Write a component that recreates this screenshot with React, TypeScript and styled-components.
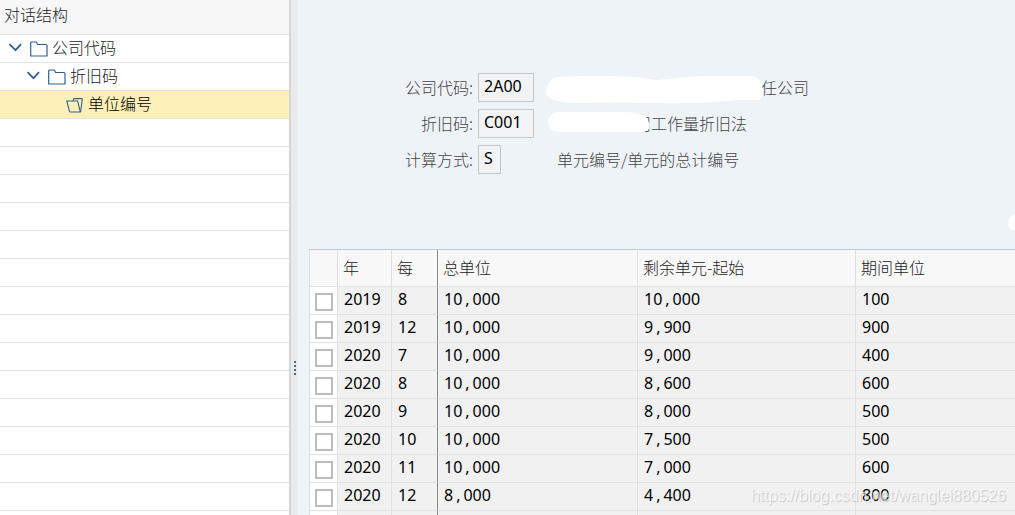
import React from "react";
import styled, { createGlobalStyle, css } from "styled-components";

const GlobalStyle = createGlobalStyle`
  *, *::before, *::after { box-sizing: border-box; }
  body {
    margin: 0;
    background: #eef3f8;
    color: #222;
    font-family: "Noto Sans CJK SC", sans-serif;
    font-size: 16px;
    font-weight: 300;
    line-height: 24px;
  }
`;

const valueFont = css`
  font-family: "Noto Sans", "Noto Sans CJK SC", sans-serif;
  font-size: 16px;
  font-weight: 400;
  color: #000;
`;

const Page = styled.div`
  position: relative;
  display: flex;
  height: 100vh;
  overflow: hidden;
`;

const Sidebar = styled.aside`
  flex: 0 0 289px;
  background: #fff;
  overflow: hidden;
`;

const SidebarTitle = styled.h2`
  margin: 0;
  height: 35px;
  padding: 2px 4px;
  border-bottom: 1px solid #e3e3e3;
  background: #f7f7f7;
  font-size: 16px;
  font-weight: 300;
`;

const Tree = styled.ul`
  margin: 0;
  padding: 0;
  list-style: none;
`;

const TreeRow = styled.li<{ $level?: number; $selected?: boolean }>`
  display: flex;
  align-items: center;
  height: 28px;
  padding-left: ${(p) => 8 + (p.$level ?? 0) * 18}px;
  border-bottom: 1px solid #e3e3e3;
  background: ${(p) => (p.$selected ? "#fcf0b8" : "#fff")};
  color: ${(p) => (p.$selected ? "#000" : "#222")};
`;

const Toggle = styled.button`
  width: 22px;
  height: 24px;
  padding: 0 0 2px;
  border: 0;
  background: none;
  text-align: left;
  line-height: 0;
`;

const ToggleSpace = styled.span`
  width: 22px;
`;

const Icon = styled.svg`
  display: block;
  fill: none;
  stroke: #30608f;
`;

const TreeLabel = styled.span`
  padding: 0 0 3px 4px;
`;

const Splitter = styled.div`
  flex: 0 0 9px;
  display: flex;
  justify-content: center;
  border-left: 2px solid #d6d6d6;
  background: #e9eaeb;
`;

const Grip = styled.div`
  align-self: center;
  display: grid;
  gap: 2px;
  margin-top: 220px;
`;

const Dot = styled.i`
  width: 2px;
  height: 2px;
  background: #52657c;
`;

const Main = styled.main`
  flex: 1;
  min-width: 0;
  display: flex;
  flex-direction: column;
  padding: 73px 0 0 11px;
`;

const Form = styled.form`
  display: grid;
  grid-template-columns: 164px 68px 1fr;
  column-gap: 5px;
  row-gap: 7px;
  margin-bottom: 75px;
  color: #444;
`;

const FieldLabel = styled.label`
  text-align: right;
  line-height: 28px;
`;

const Field = styled.input<{ $narrow?: boolean }>`
  ${valueFont}
  width: ${(p) => (p.$narrow ? 23 : 56)}px;
  height: 29px;
  padding: 0 4px 3px 5px;
  border: 1px solid #c4c6c8;
  border-radius: 0;
  background: #f1f3f4;
  outline: none;
`;

const Description = styled.div<{ $indent: number }>`
  position: relative;
  padding-left: ${(p) => p.$indent}px;
  line-height: 28px;
  white-space: nowrap;
`;

const Smudge = styled.svg`
  position: absolute;
  left: -5px;
  top: 0;
  fill: #fff;
`;

const EdgeSpot = styled.div`
  position: absolute;
  right: -9px;
  top: 215px;
  width: 16px;
  height: 16px;
  border-radius: 8px;
  background: #fff;
`;

const Grid = styled.table`
  width: 100%;
  table-layout: fixed;
  border-collapse: separate;
  border-spacing: 0;
  border-top: 1px solid #c3c7ca;
`;

const Col = styled.col<{ $width?: number }>`
  width: ${(p) => (p.$width ? `${p.$width}px` : "auto")};
`;

const cell = css<{ $frozenEdge?: boolean }>`
  border-left: 1px solid ${(p) => (p.$frozenEdge ? "#888" : "#e0e0e0")};
  border-bottom: 1px solid #e0e0e0;
  text-align: left;
  white-space: nowrap;
`;

const HeadCell = styled.th<{ $frozenEdge?: boolean }>`
  ${cell}
  height: 37px;
  padding: 0 5px 3px;
  background: #f8f8f8;
  font-weight: 300;
`;

const Cell = styled.td<{ $frozenEdge?: boolean }>`
  ${cell}
  ${valueFont}
  height: 28px;
  padding: 0 6px 3px;
  background: #f1f1f1;
`;

const SelectCell = styled(Cell)`
  padding: 2px 0 0 5px;
  background: #fff;
  line-height: 0;
`;

const Check = styled.input`
  appearance: none;
  width: 18px;
  height: 18px;
  margin: 0;
  border: 2px solid #bcbcbc;
  background: #fff;
`;

const Separator = styled.span`
  padding: 0 3px;
`;

const Watermark = styled.div`
  position: absolute;
  right: 9px;
  bottom: 7px;
  color: rgba(255, 255, 255, 0.7);
  font-family: "Liberation Sans", sans-serif;
  font-size: 16px;
  font-weight: 400;
  text-shadow: 1px 1px 1px rgba(0, 0, 0, 0.18);
  pointer-events: none;
`;

const Chevron = () => (
  <Icon width="14" height="9" viewBox="0 0 14 9" strokeWidth="1.8">
    <path d="M1.5 1.2 7.5 7.2 13 1.2" />
  </Icon>
);

const Folder = () => (
  <Icon width="18" height="18" viewBox="0 0 18 18" strokeWidth="1.2">
    <path d="M.7 16V3q0-1 1-1h4.1q.9 0 1 .9l.8 1.6H16q1 0 1 1V16Z" />
  </Icon>
);

const OpenFolder = () => (
  <Icon width="18" height="18" viewBox="0 0 18 18" strokeWidth="1.1">
    <path d="M.8 5H11.6L14.4 16H4Q3.6 16 3.4 15Z" />
    <path d="M7 5 8 2.6H15.8Q16.4 2.6 16.3 3.2L14.6 16" />
  </Icon>
);

const Amount = ({ value }: { value: string }) => {
  const [head, tail] = value.split(",");
  return tail ? (
    <>
      {head}
      <Separator>,</Separator>
      {tail}
    </>
  ) : (
    <>{head}</>
  );
};

const rows = [
  ["2019", "8", "10,000", "10,000", "100"],
  ["2019", "12", "10,000", "9,900", "900"],
  ["2020", "7", "10,000", "9,000", "400"],
  ["2020", "8", "10,000", "8,600", "600"],
  ["2020", "9", "10,000", "8,000", "500"],
  ["2020", "10", "10,000", "7,500", "500"],
  ["2020", "11", "10,000", "7,000", "600"],
  ["2020", "12", "8,000", "4,400", "800"],
];

const headings = ["年", "每", "总单位", "剩余单元-起始", "期间单位"];

export default function App() {
  return (
    <>
      <GlobalStyle />
      <Page>
        <Sidebar>
          <SidebarTitle>对话结构</SidebarTitle>
          <Tree>
            <TreeRow>
              <Toggle aria-label="公司代码"><Chevron /></Toggle>
              <Folder />
              <TreeLabel>公司代码</TreeLabel>
            </TreeRow>
            <TreeRow $level={1}>
              <Toggle aria-label="折旧码"><Chevron /></Toggle>
              <Folder />
              <TreeLabel>折旧码</TreeLabel>
            </TreeRow>
            <TreeRow $level={2} $selected>
              <ToggleSpace />
              <OpenFolder />
              <TreeLabel>单位编号</TreeLabel>
            </TreeRow>
            {Array.from({ length: 15 }, (_, i) => (
              <TreeRow key={i} aria-hidden="true" />
            ))}
          </Tree>
        </Sidebar>
        <Splitter>
          <Grip>
            <Dot /><Dot /><Dot /><Dot />
          </Grip>
        </Splitter>
        <Main>
          <Form>
            <FieldLabel htmlFor="company">公司代码:</FieldLabel>
            <Field id="company" defaultValue="2A00" readOnly />
            <Description $indent={194}>
              责任公司
              <Smudge width="220" height="32" viewBox="0 0 220 32">
                <path d="M12 4C50 2 90 3 110 7 135 5 140 3 170 3H206Q214 5 216 12 219 24 212 27 195 26 180 28 150 31 110 30 60 29 24 30 0 28 0 19 2 5 12 4Z" />
              </Smudge>
            </Description>

            <FieldLabel htmlFor="depreciation">折旧码:</FieldLabel>
            <Field id="depreciation" defaultValue="C001" readOnly />
            <Description $indent={84}>
              司工作量折旧法
              <Smudge width="108" height="30" viewBox="0 0 108 30">
                <path d="M12 3H75Q92 3 100 8 105 15 103 20 98 24 80 23H12Q2 22 2 13 3 4 12 3Z" />
              </Smudge>
            </Description>

            <FieldLabel htmlFor="method">计算方式:</FieldLabel>
            <Field id="method" $narrow defaultValue="S" readOnly />
            <Description $indent={6}>单元编号/单元的总计编号</Description>
          </Form>

          <Grid>
            <colgroup>
              <Col $width={28} />
              <Col $width={54} />
              <Col $width={46} />
              <Col $width={200} />
              <Col $width={218} />
              <Col />
            </colgroup>
            <thead>
              <tr>
                <HeadCell />
                {headings.map((h, i) => (
                  <HeadCell key={h} $frozenEdge={i === 2}>{h}</HeadCell>
                ))}
              </tr>
            </thead>
            <tbody>
              {rows.map((row, r) => (
                <tr key={r}>
                  <SelectCell>
                    <Check type="checkbox" aria-label={`${row[0]} ${row[1]}`} />
                  </SelectCell>
                  {row.map((value, i) => (
                    <Cell key={i} $frozenEdge={i === 2}>
                      <Amount value={value} />
                    </Cell>
                  ))}
                </tr>
              ))}
              <tr>
                <SelectCell />
                {headings.map((h, i) => (
                  <Cell key={h} $frozenEdge={i === 2} />
                ))}
              </tr>
            </tbody>
          </Grid>
        </Main>
        <EdgeSpot />
        <Watermark>https://blog.csdn.net/wanglei880526</Watermark>
      </Page>
    </>
  );
}
